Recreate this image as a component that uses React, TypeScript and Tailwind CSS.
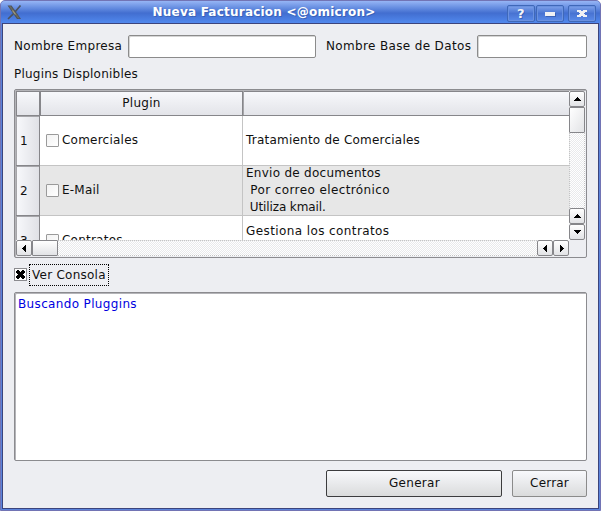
import React from "react";

const PATTERN =
  "bg-[conic-gradient(#e9eaec_25%,#ffffff_0_50%,#e9eaec_0_75%,#ffffff_0)] bg-[length:2px_2px]";

type Dir = "up" | "down" | "left" | "right";

const ARROWS: Record<Dir, string> = {
  up: "M3 1h1v1h1v1h1v1h1v1H0V4h1V3h1V2h1z",
  down: "M0 1h7v1H6v1H5v1H4v1H3V4H2V3H1V2H0z",
  left: "M4 0h1v7H4V6H3V5H2V4H1V3h1V2h1V1h1z",
  right: "M2 0h1v1h1v1h1v1h1v1H5v1H4v1H3v1H2z",
};

function ScrollButton({ dir }: { dir: Dir }) {
  return (
    <button className="flex h-4 w-4 shrink-0 items-center justify-center rounded-[2px] border border-[#86868a] bg-linear-to-b from-white to-[#e2e3e6]">
      <svg width="7" height="7" viewBox="0 0 7 7" shapeRendering="crispEdges">
        <path d={ARROWS[dir]} fill="#000" />
      </svg>
    </button>
  );
}

function TitleButton({ children, className = "" }: { children: React.ReactNode; className?: string }) {
  return (
    <button
      className={`flex h-[17px] w-7 items-center justify-center rounded-[2px] border border-[#3f68b8] bg-linear-to-b from-[#7fa2ea] via-[#4873d2] to-[#5a8bea] shadow-[inset_0_0_0_1px_#6a91e0] ${className}`}
    >
      {children}
    </button>
  );
}

function Field({ className }: { className: string }) {
  return (
    <input
      className={`h-[23px] rounded-[2px] border border-[#8b8b8b] bg-white shadow-[inset_1px_1px_0_#d5d5d5] outline-none ${className}`}
    />
  );
}

function Box() {
  return (
    <span className="h-[13px] w-[13px] shrink-0 rounded-[1px] border border-[#9a9a9a] bg-linear-to-br from-[#f2f2f2] to-white" />
  );
}

interface Line {
  text: string;
  tracking: string;
}

interface Row {
  id: number;
  name: string;
  lines: Line[];
  lift?: boolean;
  shaded?: boolean;
}

const ROWS: Row[] = [
  { id: 1, name: "Comerciales", lines: [{ text: "Tratamiento de Comerciales", tracking: "tracking-[0.22px]" }] },
  {
    id: 2,
    name: "E-Mail",
    lines: [
      { text: "Envio de documentos", tracking: "tracking-[0.27px]" },
      { text: " Por correo electrónico", tracking: "tracking-[0.4px]" },
      { text: " Utiliza kmail.", tracking: "tracking-[-0.1px]" },
    ],
    shaded: true,
  },
  {
    id: 3,
    name: "Contratos",
    lines: [
      { text: "Gestiona los contratos", tracking: "tracking-[0.4px]" },
      { text: " ", tracking: "tracking-normal" },
    ],
    lift: true,
  },
];

function PluginRow({ row }: { row: Row }) {
  return (
    <div className="flex h-[50px] shrink-0">
      <div className="w-6 shrink-0 border-r border-b border-[#86868a] bg-linear-to-r from-[#f8f9fc] to-[#e0e1e6] pt-[17px] pl-1 shadow-[inset_1px_1px_0_#a5a5a9]">
        {row.id}
      </div>
      <div
        className={`flex w-[203px] shrink-0 items-center gap-[3px] border-r border-b border-[#c4c4c4] pl-1.5 ${row.shaded ? "bg-[#e7e7e7]" : "bg-white"}`}
      >
        <Box />
        <span className="-mt-px tracking-[0.23px]">{row.name}</span>
      </div>
      <div
        className={`flex grow flex-col justify-center border-b border-[#c4c4c4] pl-[3px] ${row.lift ? "pb-0.5" : ""} ${row.shaded ? "bg-[#e7e7e7]" : "bg-white"}`}
      >
        {row.lines.map((l) => (
          <div key={l.text} className={`h-[17px] leading-[17px] whitespace-pre ${l.tracking}`}>
            {l.text}
          </div>
        ))}
      </div>
    </div>
  );
}

export default function App() {
  return (
    <div className="h-[511px] w-[601px] bg-white">
      <div className="flex h-full flex-col overflow-hidden rounded-t-[5px] border border-[#7274b4] bg-[#5b83dc] font-['DejaVu_Sans',sans-serif] text-[12px] leading-[17px] tracking-[0.3px] text-[#101010]">
        <header className="flex h-[22px] shrink-0 items-center bg-linear-to-b from-[#96b5f5] via-[#426ed0] via-55% to-[#5189ee] pr-1 pl-[6px]">
          <svg width="15" height="15" viewBox="0 0 15 15" className="shrink-0">
            <path d="M0.5 0.5H4.5L14 14H10Z" fill="#4d5358" />
            <path d="M1.8 1.2H3.8L12.6 13.3H10.8Z" fill="#6a6a60" />
            <path d="M13.5 0.5L8.2 6.8M6.3 8.8L1 14" stroke="#4c535e" strokeWidth="1.7" fill="none" />
            <path d="M5.5 5.5L8.5 9.5" stroke="#a39b7c" strokeWidth="1.2" />
          </svg>
          <h1 className="grow pr-px text-center text-[12px] font-bold tracking-[0.22px] text-white [text-shadow:1px_1px_0_#3a62b8]">
            Nueva Facturacion &lt;@omicron&gt;
          </h1>
          <div className="flex pt-[3px]">
            <TitleButton>
              <span className="text-[13px] font-bold text-[#f4f5f8] [text-shadow:1px_1px_0_#3a62b8]">?</span>
            </TitleButton>
            <TitleButton className="ml-px">
              <span className="h-1 w-2.5 bg-[#f0f1f4] shadow-[1px_1px_0_#3a62b8]" />
            </TitleButton>
            <TitleButton className="ml-1">
              <svg width="10" height="7" viewBox="0 0 10 7" shapeRendering="crispEdges">
                <path d="M0 0h4v1h2V0h4v2H8v1H7v1h1v1h2v2H6V6H4v1H0V5h2V4h1V3H2V2H0z" fill="#f0f1f4" />
              </svg>
            </TitleButton>
          </div>
        </header>

        <main className="mx-px mb-px flex grow flex-col border border-[#3c447c] bg-[#edeef2] px-[11px]">
          <div className="mt-[11px] flex h-[23px] items-center">
            <label className="w-[114px] whitespace-nowrap">Nombre Empresa</label>
            <Field className="w-[188px]" />
            <label className="ml-2.5 w-[151px] tracking-[0.35px] whitespace-nowrap">Nombre Base de Datos</label>
            <Field className="w-[110px]" />
          </div>
          <div className="mt-2 h-[17px] tracking-[0.23px]">Plugins Displonibles</div>

          <section className="mt-1.5 flex h-[169px] shrink-0 flex-col rounded-[2px] border border-[#8b8b8f] pt-px pl-px shadow-[inset_1px_1px_0_#b4b4b8]">
            <div className="flex h-[149px]">
              <div className="flex w-[553px] flex-col overflow-hidden">
                <div className="flex h-[25px] shrink-0 border-b border-[#86868a] bg-linear-to-b from-[#f8f9fc] to-[#e3e4e9] shadow-[inset_0_1px_0_#86868a]">
                  <div className="w-6 border-r border-[#86868a] shadow-[inset_1px_1px_0_#86868a]" />
                  <div className="w-[203px] border-r border-l border-[#86868a] pt-1 text-center">Plugin</div>
                  <div className="w-px bg-[#a5a5a9]" />
                </div>
                {ROWS.map((r) => (
                  <PluginRow key={r.id} row={r} />
                ))}
              </div>
              <div className={`flex w-4 flex-col ${PATTERN}`}>
                <ScrollButton dir="up" />
                <div className="h-[26px] rounded-[1px] border border-[#86868a] bg-linear-to-br from-white to-[#e2e3e6]" />
                <div className="grow border-x border-dotted border-[#c4c4c4]" />
                <ScrollButton dir="up" />
                <ScrollButton dir="down" />
              </div>
            </div>
            <div className="flex h-4">
              <div className={`flex w-[553px] ${PATTERN}`}>
                <ScrollButton dir="left" />
                <div className="w-[26px] rounded-[1px] border border-[#86868a] bg-linear-to-b from-white to-[#e2e3e6]" />
                <div className="grow border-y border-dotted border-[#c4c4c4]" />
                <ScrollButton dir="left" />
                <ScrollButton dir="right" />
              </div>
            </div>
          </section>

          <div className="mt-1.5 flex h-[22px] shrink-0 items-center">
            <span className="-mt-px flex h-[13px] w-[13px] items-center justify-center border border-[#8b8b8f] bg-white">
              <svg width="9" height="9" viewBox="0 0 9 9" shapeRendering="crispEdges">
                <path d="M1 0h2v1h1v1h1V1h1V0h2v1h1v2H8v1H7v1h1v1h1v2H8v1H6V8H5V7H4v1H3v1H1V8H0V6h1V5h1V4H1V3H0V1h1z" fill="#000" />
              </svg>
            </span>
            <span className="ml-0.5 flex h-[22px] w-20 items-center border border-dotted border-black pl-0.5 tracking-[0.25px] whitespace-nowrap">
              Ver Consola
            </span>
          </div>

          <div className="mt-1.5 h-[169px] shrink-0 rounded-[2px] border border-[#8b8b8f] bg-white pt-[3px] pl-[3px] tracking-[0.35px] text-[#0000e0] shadow-[inset_1px_1px_0_#b4b4b8]">
            Buscando Pluggins
          </div>

          <div className="mt-[9px] flex justify-end gap-2.5">
            <button className="h-[27px] w-[176px] rounded-[2px] border border-[#3c3c3e] bg-linear-to-b from-[#f8f9fc] to-[#dadbdc] pl-px tracking-[0.3px]">
              Generar
            </button>
            <button className="h-[27px] w-[75px] rounded-[2px] border border-[#8b8b8b] bg-linear-to-b from-[#f8f9fc] to-[#dadbdc] tracking-[0.2px]">
              Cerrar
            </button>
          </div>
        </main>
      </div>
    </div>
  );
}
